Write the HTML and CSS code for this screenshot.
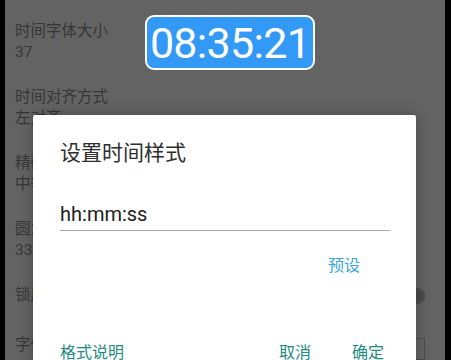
FILE: index.html
```html
<!DOCTYPE html>
<html lang="zh">
<head>
<meta charset="utf-8">
<link rel="stylesheet" href="styles.css">
</head>
<body>
<div class="screen">
  <ul class="settings">
    <li class="item"><div class="label">时间字体大小</div><div class="value">37</div></li>
    <li class="item"><div class="label">时间对齐方式</div><div class="value">左对齐</div></li>
    <li class="item"><div class="label">精确显示</div><div class="value">中等</div></li>
    <li class="item"><div class="label">圆角大小</div><div class="value">33</div></li>
    <li class="item item-switch"><div class="label">锁屏显示</div><span class="switch"></span></li>
    <li class="item item-switch"><div class="label">字体颜色</div><span class="swatch"></span></li>
  </ul>

  <div class="clock">08:35:21</div>

  <div class="dialog">
    <h2 class="dialog-title">设置时间样式</h2>
    <div class="field">hh:mm:ss</div>
    <div class="preset-row"><span class="preset">预设</span></div>
    <div class="actions">
      <span class="btn">格式说明</span>
      <span class="spacer"></span>
      <span class="btn">取消</span>
      <span class="btn">确定</span>
    </div>
  </div>
</div>
</body>
</html>
```

FILE: styles.css
```css
html, body {
  margin: 0;
  padding: 0;
  background: #000;
  width: 451px;
  height: 360px;
  overflow: hidden;
}

.screen {
  position: relative;
  margin-left: 5px;
  width: 440px;
  height: 360px;
  background: #636363;
  overflow: hidden;
  font-family: Roboto, "Noto Sans CJK SC", sans-serif;
}

.settings {
  list-style: none;
  margin: 0;
  padding: 9px 0 0 10px;
}

.item {
  padding: 12px 0;
  font-size: 15.5px;
  line-height: 21px;
  color: #363636;
  display: flex;
  flex-direction: column;
}

.item-switch {
  flex-direction: row;
  align-items: center;
  justify-content: space-between;
  padding-right: 20px;
}

.switch {
  width: 16px;
  height: 16px;
  border-radius: 50%;
  background: #4a4a4a;
}

.swatch {
  width: 14px;
  height: 20px;
  border: 1px solid #4c4c4c;
  margin-top: 8px;
}

.clock {
  position: absolute;
  left: 140px;
  top: 15px;
  width: 166px;
  height: 51px;
  border: 2px solid #fff;
  border-radius: 9px;
  background: #3399f7;
  color: #fff;
  font-size: 43px;
  line-height: 52px;
  text-align: center;
  letter-spacing: -0.7px;
}

.dialog {
  position: absolute;
  left: 28px;
  top: 115px;
  width: 383px;
  height: 270px;
  background: #fff;
  border-radius: 2px;
  box-shadow: 0 0 14px rgba(0, 0, 0, 0.25);
  padding: 0 32px 0 27px;
  box-sizing: border-box;
}

.dialog-title {
  margin: 24px 0 0;
  font-size: 21px;
  font-weight: normal;
  line-height: 28px;
  color: #2e2e2e;
}

.field {
  margin-top: 34px;
  font-size: 20px;
  line-height: 26px;
  color: #222;
  border-bottom: 1.5px solid #a8a8a8;
  padding-bottom: 3px;
  margin-right: -6px;
}

.preset-row {
  display: flex;
  justify-content: flex-end;
  padding-right: 24px;
  margin-top: 24px;
}

.preset {
  font-size: 16px;
  line-height: 22px;
  color: #3aa5d8;
}

.actions {
  display: flex;
  gap: 41px;
  margin-top: 65px;
}

.spacer {
  flex: 1;
  margin-left: -41px;
}

.btn {
  font-size: 16px;
  line-height: 22px;
  color: #238a83;
}
```
